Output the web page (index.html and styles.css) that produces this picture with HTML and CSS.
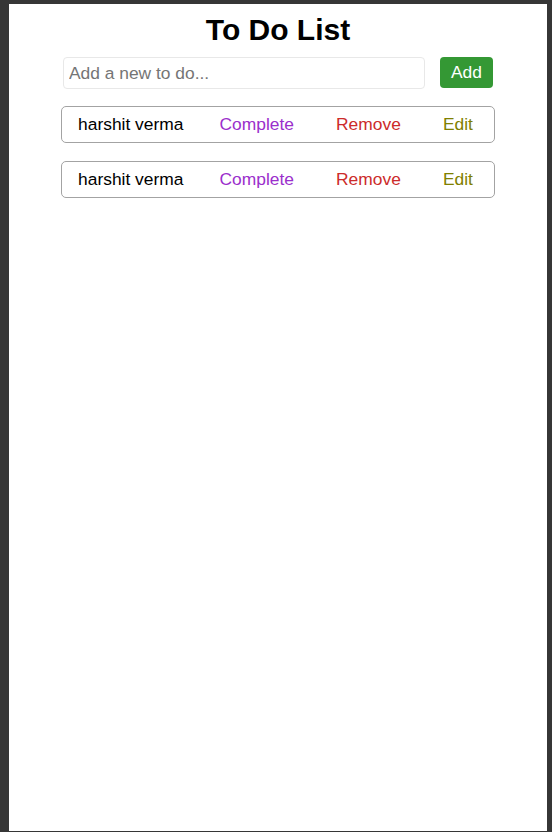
FILE: index.html
```html
<!DOCTYPE html>
<html lang="en">
<head>
<meta charset="utf-8">
<title>To Do List</title>
<link rel="stylesheet" href="styles.css">
</head>
<body>
  <main class="app">
    <h1 class="title">To Do List</h1>
    <form class="add-row" onsubmit="return false">
      <input class="add-input" type="text" placeholder="Add a new to do...">
      <button class="add-btn" type="submit">Add</button>
    </form>
    <ul class="todo-list">
      <li class="todo-item">
        <span class="todo-text">harshit verma</span>
        <button class="action complete">Complete</button>
        <button class="action remove">Remove</button>
        <button class="action edit">Edit</button>
      </li>
      <li class="todo-item">
        <span class="todo-text">harshit verma</span>
        <button class="action complete">Complete</button>
        <button class="action remove">Remove</button>
        <button class="action edit">Edit</button>
      </li>
    </ul>
  </main>
</body>
</html>
```
FILE: styles.css
```css
html {
  height: 100%;
  background: #363636;
}

body {
  margin: 4px 5px 1px 9px;
  height: calc(100% - 5px);
  box-sizing: border-box;
  background: #ffffff;
  font-family: "Liberation Sans", Arial, sans-serif;
  color: #000;
}

.app {
  width: 434px;
  margin: 0 auto;
  display: flex;
  flex-direction: column;
  align-items: center;
}

.title {
  margin: 9px 0 0;
  font-size: 30px;
  line-height: 34px;
  font-weight: bold;
}

.add-row {
  margin: 10px 0 0;
  display: flex;
  gap: 15px;
}

.add-input {
  width: 362px;
  height: 32px;
  box-sizing: border-box;
  border: 1px solid #e8e8e8;
  border-radius: 4px;
  padding: 0 5px;
  font-family: "Liberation Sans", Arial, sans-serif;
  font-size: 17.4px;
  color: #000;
  outline: none;
}

.add-input::placeholder {
  color: #757575;
}

.add-btn {
  width: 53px;
  height: 31px;
  padding: 0;
  border: none;
  border-radius: 4px;
  background: #349834;
  color: #fff;
  font-family: "Liberation Sans", Arial, sans-serif;
  font-size: 17.4px;
}

.todo-list {
  list-style: none;
  margin: 17px 0 0;
  padding: 0;
  width: 100%;
  display: flex;
  flex-direction: column;
  gap: 18px;
}

.todo-item {
  display: flex;
  justify-content: space-around;
  align-items: center;
  border: 1px solid #a3a3a3;
  border-radius: 5px;
  padding: 8px 0 8px 1px;
  font-size: 17.4px;
  line-height: 19px;
}

.todo-text {
  color: #000;
}

.action {
  background: none;
  border: none;
  padding: 0 6px;
  font-family: "Liberation Sans", Arial, sans-serif;
  font-size: 17.4px;
  line-height: 19px;
}

.complete { color: #9b2fcc; }
.remove { color: #cc2b2b; }
.edit { color: #808000; }
```
